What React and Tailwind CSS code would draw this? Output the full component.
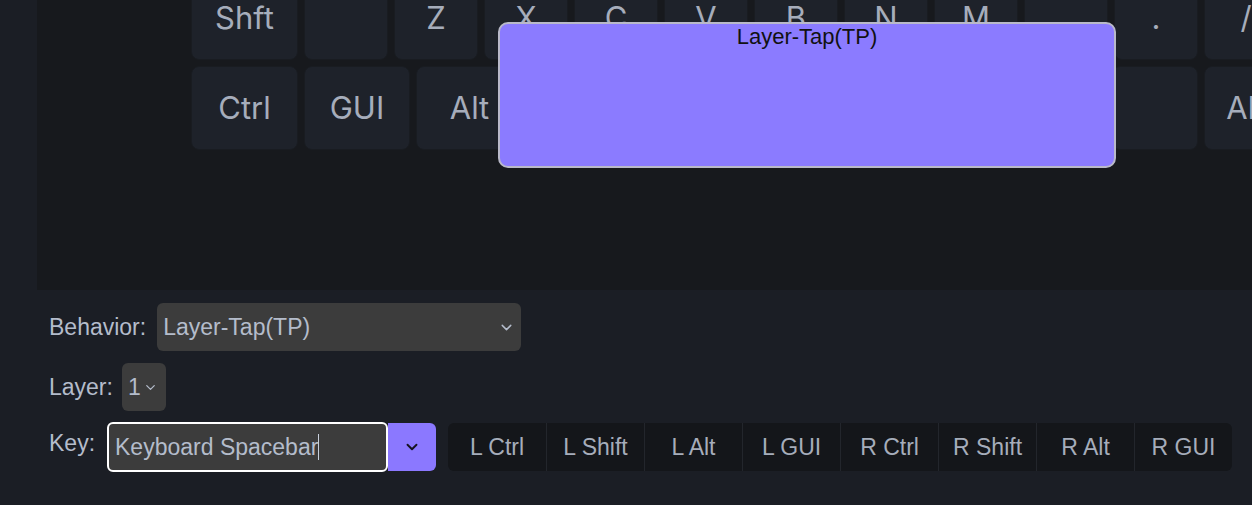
import { ChevronDown } from 'lucide-react'

const ROW1 = [
  { label: 'Shft', w: 'w-[107px]' },
  { label: '', w: 'w-[84px]' },
  { label: 'Z' }, { label: 'X' }, { label: 'C' }, { label: 'V' }, { label: 'B' },
  { label: 'N' }, { label: 'M' }, { label: ',' }, { label: '.' }, { label: '/' },
]

const ROW2 = [
  { label: 'Ctrl', w: 'w-[107px]' },
  { label: 'GUI', w: 'w-[106px]' },
  { label: 'Alt', w: 'w-[107px]' },
  { label: '', w: 'w-[577px]' },
  { label: '', w: 'w-[86px]' },
  { label: 'Alt', w: 'w-[84px]' },
]

const MODS = ['L Ctrl', 'L Shift', 'L Alt', 'L GUI', 'R Ctrl', 'R Shift', 'R Alt', 'R GUI']

function Key({ label, w }) {
  return (
    <div className={`${w || 'w-[84px]'} h-[84px] shrink-0 rounded-lg bg-[#1e222a] border border-[#191c21] flex items-center justify-center text-[31px] text-[#a6adbb]`}
      style={{ fontFamily: 'Inter, sans-serif' }}>
      {label}
    </div>
  )
}

export default function App() {
  return (
    <div className="w-[1252px] h-[505px] overflow-hidden bg-[#1b1e25] flex" style={{ fontFamily: '"Liberation Sans", Arial, sans-serif' }}>
      <div className="w-[37px] shrink-0" />

      <div className="flex-1 min-w-0 flex flex-col">
        {/* keyboard */}
        <div className="relative h-[290px] bg-[#17191d] overflow-hidden">
          <div className="flex flex-col gap-[6px] pl-[154px] -mt-[24px]">
            <div className="flex gap-[6px]">
              {ROW1.map((k, i) => <Key key={i} {...k} />)}
            </div>
            <div className="flex gap-[6px]">
              {ROW2.map((k, i) => <Key key={i} {...k} />)}
            </div>
          </div>

          {/* selected key editor */}
          <div className="absolute left-[461px] top-[22px] w-[618px] h-[146px] rounded-[10px] bg-[#8b7bff] border-2 border-[#b9b9c9] flex justify-center">
            <span className="text-[22px] leading-none mt-[2px] text-[#111]">Layer-Tap(TP)</span>
          </div>
        </div>

        {/* controls */}
        <div className="flex flex-col gap-[12px] pl-[12px] pt-[13px] text-[23px] text-[#b4bccb]">
          <div className="flex items-center gap-[11px]">
            <span>Behavior:</span>
            <div className="w-[364px] h-[48px] rounded-md bg-[#3c3c3c] flex items-center justify-between pl-[6px] pr-[6px]">
              <span>Layer-Tap(TP)</span>
              <ChevronDown className="w-[17px] h-[17px] text-[#b4bccb]" strokeWidth={2} />
            </div>
          </div>

          <div className="flex items-center gap-[9px]">
            <span>Layer:</span>
            <div className="w-[44px] h-[48px] rounded-md bg-[#3c3c3c] flex items-center pl-[6px] gap-[2px]">
              <span>1</span>
              <ChevronDown className="w-[15px] h-[15px] text-[#b4bccb]" strokeWidth={2} />
            </div>
          </div>

          <div className="flex items-start gap-[12px] -mt-[1px]">
            <span className="mt-[4px]">Key:</span>
            <div className="flex">
              <div className="w-[281px] h-[50px] rounded-md bg-[#3c3c3c] border-2 border-white flex items-center pl-[6px]">
                <span>Keyboard Spacebar</span>
                <span className="w-px h-[26px] bg-[#c8d0dc]" />
              </div>
              <div className="w-[48px] h-[48px] mt-px rounded-r-md bg-[#8b78ff] flex items-center justify-center">
                <ChevronDown className="w-[18px] h-[18px] text-[#15121f]" strokeWidth={2.5} />
              </div>
            </div>
            <div className="mt-px h-[48px] rounded-md bg-[#14161a] flex">
              {MODS.map((m, i) => (
                <div key={m} className={`w-[98px] h-full flex items-center justify-center text-[#a6adbb] ${i > 0 ? 'border-l border-[#23262c]' : ''}`}>
                  {m}
                </div>
              ))}
            </div>
          </div>
        </div>
      </div>
    </div>
  )
}
